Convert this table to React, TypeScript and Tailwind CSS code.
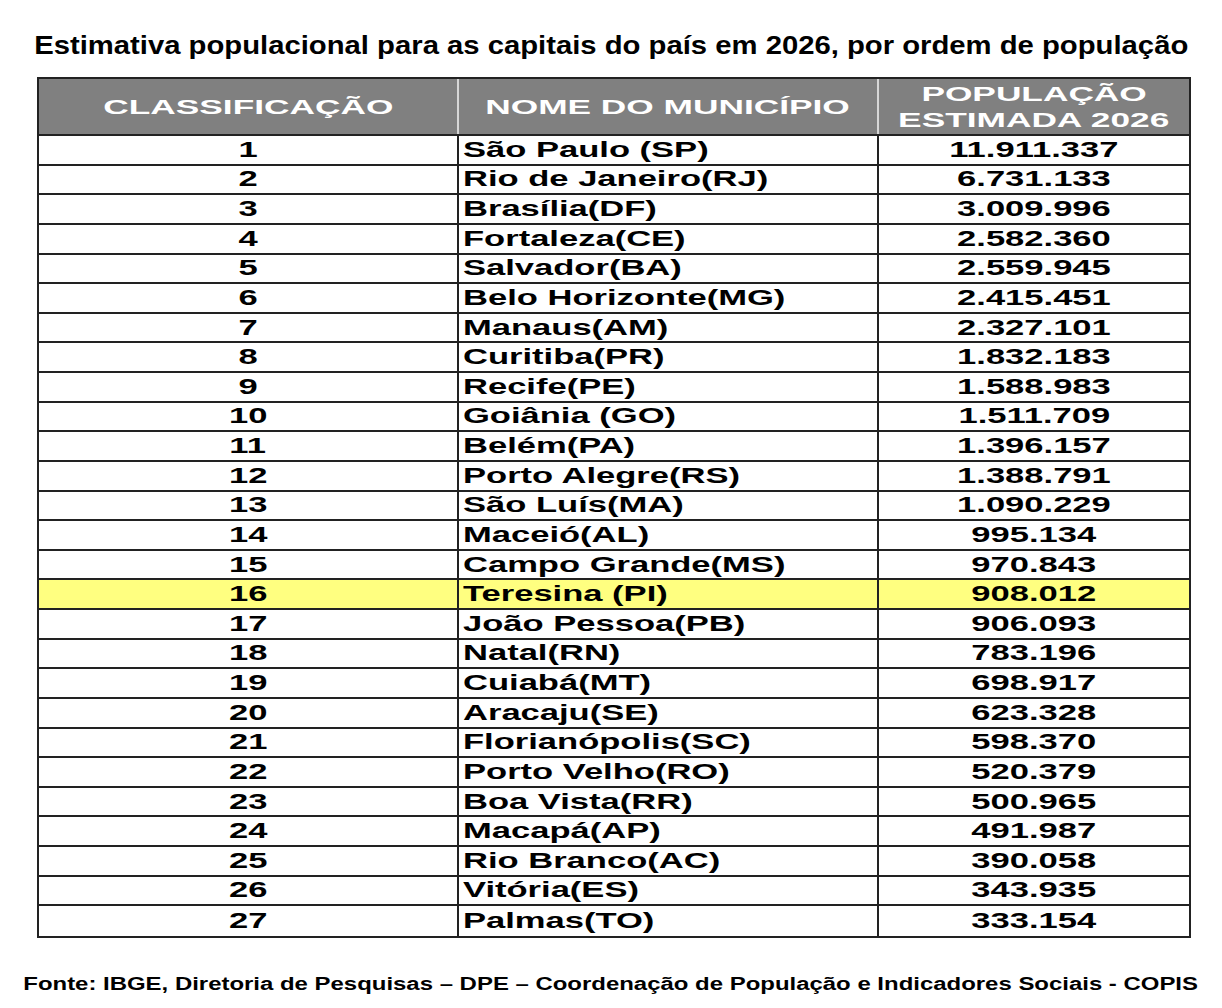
const rows: [number, string, string][] = [
  [1, 'São Paulo (SP)', '11.911.337'],
  [2, 'Rio de Janeiro(RJ)', '6.731.133'],
  [3, 'Brasília(DF)', '3.009.996'],
  [4, 'Fortaleza(CE)', '2.582.360'],
  [5, 'Salvador(BA)', '2.559.945'],
  [6, 'Belo Horizonte(MG)', '2.415.451'],
  [7, 'Manaus(AM)', '2.327.101'],
  [8, 'Curitiba(PR)', '1.832.183'],
  [9, 'Recife(PE)', '1.588.983'],
  [10, 'Goiânia (GO)', '1.511.709'],
  [11, 'Belém(PA)', '1.396.157'],
  [12, 'Porto Alegre(RS)', '1.388.791'],
  [13, 'São Luís(MA)', '1.090.229'],
  [14, 'Maceió(AL)', '995.134'],
  [15, 'Campo Grande(MS)', '970.843'],
  [16, 'Teresina (PI)', '908.012'],
  [17, 'João Pessoa(PB)', '906.093'],
  [18, 'Natal(RN)', '783.196'],
  [19, 'Cuiabá(MT)', '698.917'],
  [20, 'Aracaju(SE)', '623.328'],
  [21, 'Florianópolis(SC)', '598.370'],
  [22, 'Porto Velho(RO)', '520.379'],
  [23, 'Boa Vista(RR)', '500.965'],
  [24, 'Macapá(AP)', '491.987'],
  [25, 'Rio Branco(AC)', '390.058'],
  [26, 'Vitória(ES)', '343.935'],
  [27, 'Palmas(TO)', '333.154'],
]

const Cell = ({ text, left }: { text: string; left?: boolean }) => (
  <span
    className={
      left
        ? 'inline-block origin-left scale-x-[1.57] whitespace-nowrap'
        : 'inline-block scale-x-[1.57] whitespace-nowrap'
    }
  >
    {text}
  </span>
)

const App = () => {
  return (
    <div className="w-[1222px] h-[1008px] bg-white text-black font-['Liberation_Sans',Arial,sans-serif]">
      <h1 className="pt-[30px] h-[77px] text-center text-[25px] font-bold leading-[30px] text-black">
        <span className="inline-block scale-x-[1.17] whitespace-nowrap">
          Estimativa populacional para as capitais do país em 2026, por ordem de população
        </span>
      </h1>

      <div className="ml-[37px] w-[1154px] border-2 border-[#222]">
        <div className="grid grid-cols-[418px_420px_1fr] h-[57px] bg-[#808080] border-b-2 border-[#222] text-white font-bold text-[21px]">
          <div className="flex items-center justify-center">
            <span className="inline-block scale-x-[1.68]">CLASSIFICAÇÃO</span>
          </div>
          <div className="flex items-center justify-center border-l-2 border-[#d6d6d6]">
            <span className="inline-block scale-x-[1.68]">NOME DO MUNICÍPIO</span>
          </div>
          <div className="flex flex-col items-center justify-center border-l-2 border-[#d6d6d6] leading-[26px]">
            <span className="inline-block scale-x-[1.68]">POPULAÇÃO</span>
            <span className="inline-block scale-x-[1.68]">ESTIMADA 2026</span>
          </div>
        </div>

        {rows.map(([n, name, pop], i) => (
          <div
            key={n}
            className={`grid grid-cols-[418px_420px_1fr] h-[29.63px] text-[22px] font-bold leading-none ${
              i < rows.length - 1 ? 'border-b-2 border-[#222]' : ''
            } ${n === 16 ? 'bg-[#ffff80]' : ''}`}
          >
            <div className="flex items-center justify-center">
              <Cell text={String(n)} />
            </div>
            <div className="flex items-center pl-[4px] border-l-2 border-[#222]">
              <Cell text={name} left />
            </div>
            <div className="flex items-center justify-center border-l-2 border-[#222]">
              <Cell text={pop} />
            </div>
          </div>
        ))}
      </div>

      <p className="mt-[35px] text-center text-[18px] font-bold leading-[22px]">
        <span className="inline-block scale-x-[1.33] whitespace-nowrap">
          Fonte: IBGE, Diretoria de Pesquisas – DPE – Coordenação de População e Indicadores Sociais - COPIS
        </span>
      </p>
    </div>
  )
}

export default App
